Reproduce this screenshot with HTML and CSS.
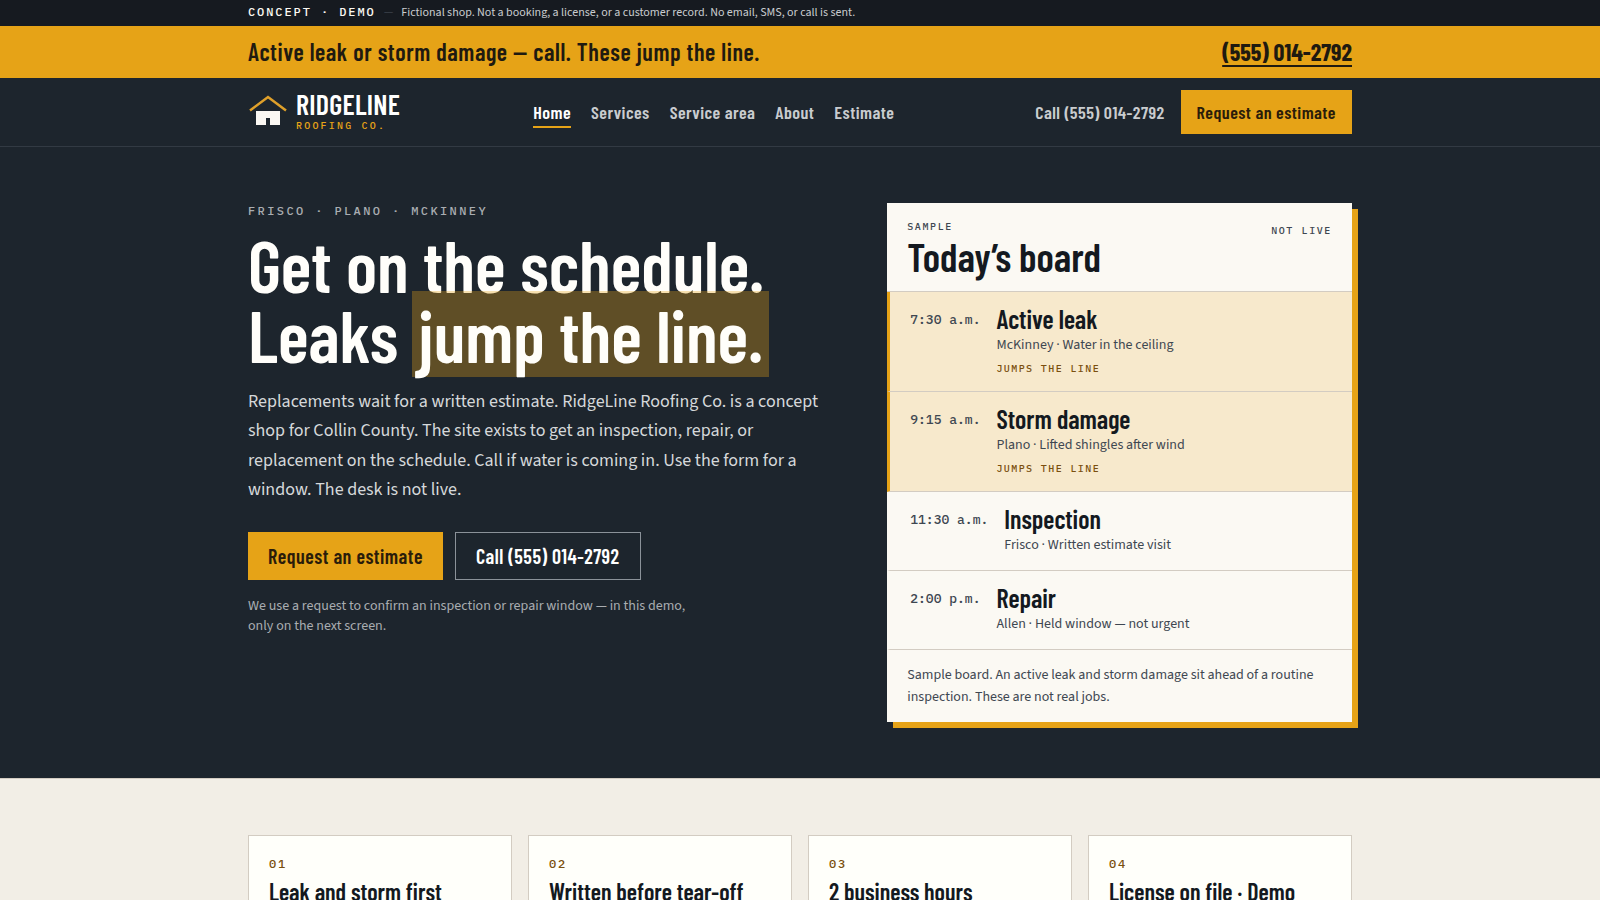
FILE: index.html
```html
<!DOCTYPE html>
<html lang="en">
<head>
  <meta charset="utf-8">
  <meta name="viewport" content="width=device-width, initial-scale=1">
  <title>RidgeLine Roofing Co.</title>
  <link rel="stylesheet" href="styles.css">
</head>
<body>
  <div class="notice">
    <div class="wrap notice-row">
      <span class="notice-tag">Concept · Demo</span>
      <span class="notice-dash" aria-hidden="true">—</span>
      <span>Fictional shop. Not a booking, a license, or a customer record. No email, SMS, or call is sent.</span>
    </div>
  </div>

  <div class="urgent">
    <div class="wrap urgent-row">
      <p class="urgent-text">Active leak or storm damage — call. These jump the line.</p>
      <a class="urgent-phone" href="tel:5550142792">(555) 014-2792</a>
    </div>
  </div>

  <header class="site-header">
    <div class="wrap header-row">
      <a class="brand" href="#">
        <svg class="brand-mark" viewBox="0 0 40 40" width="40" height="40" aria-hidden="true">
          <path d="M2 18.500 20 5l18 13.500" fill="none" stroke="#dfa02a" stroke-width="2.500"/>
          <path d="M8 19h24v14H22v-7h-4v7H8z" fill="#fbf8f3"/>
        </svg>
        <span class="brand-text">
          <span class="brand-name">RIDGELINE</span>
          <span class="brand-sub">Roofing Co.</span>
        </span>
      </a>
      <nav class="nav" aria-label="Main">
        <a class="nav-link is-current" href="#" aria-current="page">Home</a>
        <a class="nav-link" href="#services">Services</a>
        <a class="nav-link" href="#area">Service area</a>
        <a class="nav-link" href="#about">About</a>
        <a class="nav-link" href="#estimate">Estimate</a>
      </nav>
      <div class="header-actions">
        <a class="header-call" href="tel:5550142792">Call (555) 014-2792</a>
        <a class="btn btn-small btn-primary" href="#estimate">Request an estimate</a>
      </div>
    </div>
  </header>

  <main>
    <section class="hero">
      <div class="wrap hero-grid">
        <div class="hero-copy">
          <p class="eyebrow">Frisco · Plano · McKinney</p>
          <h1 class="headline">Get on the schedule.<br>Leaks <span class="mark">jump the line.</span></h1>
          <p class="lede">Replacements wait for a written estimate. RidgeLine Roofing Co. is a concept shop for Collin County. The site exists to get an inspection, repair, or replacement on the schedule. Call if water is coming in. Use the form for a window. The desk is not live.</p>
          <div class="hero-actions">
            <a class="btn btn-primary" href="#estimate">Request an estimate</a>
            <a class="btn btn-outline" href="tel:5550142792">Call (555) 014-2792</a>
          </div>
          <p class="hero-note">We use a request to confirm an inspection or repair window — in this demo, only on the next screen.</p>
        </div>

        <aside class="board" aria-labelledby="board-title">
          <div class="board-head">
            <div>
              <p class="label">Sample</p>
              <h2 class="board-title" id="board-title">Today’s board</h2>
            </div>
            <p class="label label-side">Not live</p>
          </div>
          <ul class="jobs">
            <li class="job is-urgent">
              <span class="job-time">7:30 a.m.</span>
              <div>
                <p class="job-name">Active leak</p>
                <p class="job-detail">McKinney · Water in the ceiling</p>
                <p class="job-flag">Jumps the line</p>
              </div>
            </li>
            <li class="job is-urgent">
              <span class="job-time">9:15 a.m.</span>
              <div>
                <p class="job-name">Storm damage</p>
                <p class="job-detail">Plano · Lifted shingles after wind</p>
                <p class="job-flag">Jumps the line</p>
              </div>
            </li>
            <li class="job">
              <span class="job-time">11:30 a.m.</span>
              <div>
                <p class="job-name">Inspection</p>
                <p class="job-detail">Frisco · Written estimate visit</p>
              </div>
            </li>
            <li class="job">
              <span class="job-time">2:00 p.m.</span>
              <div>
                <p class="job-name">Repair</p>
                <p class="job-detail">Allen · Held window — not urgent</p>
              </div>
            </li>
          </ul>
          <p class="board-note">Sample board. An active leak and storm damage sit ahead of a routine inspection. These are not real jobs.</p>
        </aside>
      </div>
    </section>

    <section class="promises">
      <div class="wrap promise-grid">
        <article class="promise">
          <p class="promise-num">01</p>
          <h3 class="promise-title">Leak and storm first</h3>
        </article>
        <article class="promise">
          <p class="promise-num">02</p>
          <h3 class="promise-title">Written before tear-off</h3>
        </article>
        <article class="promise">
          <p class="promise-num">03</p>
          <h3 class="promise-title">2 business hours</h3>
        </article>
        <article class="promise">
          <p class="promise-num">04</p>
          <h3 class="promise-title">License on file · Demo</h3>
        </article>
      </div>
    </section>
  </main>
</body>
</html>
```
FILE: styles.css
```css
:root {
  --ink: #14191f;
  --slate: #1d252d;
  --slate-line: #323a43;
  --amber: #e6a317;
  --amber-ink: #7a4f0e;
  --paper: #fbf9f3;
  --sand: #f2eee6;
  --line: #d3ccc2;
  --muted: #3e4751;
  --display: "Barlow Condensed", "Roboto Condensed", sans-serif;
  --body: "Source Sans 3", "Source Sans Pro", "Noto Sans", sans-serif;
  --mono: "IBM Plex Mono", "Liberation Mono", monospace;
}

* { box-sizing: border-box; }

body {
  margin: 0;
  background: var(--sand);
  color: var(--ink);
  font-family: var(--body);
  font-size: 16px;
  line-height: 1.6;
}

p, h1, h2, h3, ul { margin: 0; padding: 0; }
ul { list-style: none; }
a { color: inherit; text-decoration: none; }

.wrap {
  max-width: 1152px;
  margin: 0 auto;
  padding: 0 24px;
}

/* Notice and urgent bars */
.notice {
  background: #161a20;
  color: #c9cccf;
  font-size: 12px;
  line-height: 18px;
}
.notice-row {
  display: flex;
  gap: 8px;
  padding-top: 4px;
  padding-bottom: 4px;
}
.notice-tag {
  color: var(--paper);
  font-family: var(--mono);
  font-weight: 500;
  line-height: 16px;
  letter-spacing: 0.16em;
  text-transform: uppercase;
}
.notice-dash { color: #4c545d; }

.urgent {
  background: var(--amber);
  color: #1f1a10;
  font-family: var(--display);
  font-size: 24px;
  line-height: 32px;
}
.urgent-row {
  display: flex;
  align-items: center;
  justify-content: space-between;
  padding-top: 10px;
  padding-bottom: 10px;
}
.urgent-text {
  font-weight: 600;
  letter-spacing: 0.025em;
}
.urgent-phone {
  font-weight: 700;
  text-decoration: underline;
  text-decoration-thickness: 2px;
  text-underline-offset: 4px;
}

/* Header */
.site-header {
  background: var(--slate);
  border-bottom: 1px solid var(--slate-line);
  font-family: var(--display);
}
.header-row {
  display: flex;
  align-items: center;
  justify-content: space-between;
  padding-top: 12px;
  padding-bottom: 12px;
}
.brand {
  display: flex;
  align-items: center;
  gap: 8px;
}
.brand-mark { display: block; }
.brand-text {
  display: flex;
  flex-direction: column;
  gap: 4px;
}
.brand-name {
  color: #fff;
  font-size: 28px;
  font-weight: 600;
  line-height: 24px;
  letter-spacing: 0.01em;
}
.brand-sub {
  color: var(--amber);
  font-family: var(--mono);
  font-size: 10px;
  font-weight: 500;
  line-height: 12px;
  letter-spacing: 0.22em;
  text-transform: uppercase;
}
.nav {
  display: flex;
  gap: 20px;
}
.nav-link {
  padding-top: 2px;
  border-bottom: 2px solid transparent;
  color: #c9cccf;
  font-size: 18px;
  font-weight: 600;
  line-height: 27px;
  letter-spacing: 0.025em;
}
.nav-link.is-current {
  border-color: var(--amber);
  color: #fff;
}
.header-actions {
  display: flex;
  align-items: center;
  gap: 16px;
  padding-left: 8px;
}
.header-call {
  color: #c9cccf;
  font-size: 18px;
  font-weight: 600;
  letter-spacing: 0.025em;
}

.btn {
  display: inline-flex;
  align-items: center;
  min-height: 48px;
  padding: 0 20px;
  font-family: var(--display);
  font-size: 20px;
  font-weight: 600;
  line-height: 28px;
  letter-spacing: 0.025em;
}
.btn-primary {
  background: var(--amber);
  color: #2a1c0a;
}
.btn-outline {
  border: 1px solid #8b9299;
  color: #fff;
}
.btn-small {
  min-height: 44px;
  padding: 0 16px;
  font-size: 18px;
}

/* Hero */
.hero {
  padding: 56px 0;
  background: var(--slate);
}
.hero-grid {
  display: grid;
  grid-template-columns: 1.255fr 1fr;
  gap: 56px;
  align-items: start;
}
.eyebrow {
  color: #a9adb1;
  font-family: var(--mono);
  font-size: 12px;
  font-weight: 500;
  line-height: 16px;
  letter-spacing: 0.2em;
  text-transform: uppercase;
}
.headline {
  margin-top: 10px;
  color: #fffefa;
  font-family: var(--display);
  font-size: 72px;
  font-weight: 600;
  line-height: 70px;
}
.mark {
  padding: 0 6px;
  background: rgba(230, 163, 23, 0.33);
}
.lede {
  margin-top: 18px;
  color: #d5d8da;
  font-size: 18px;
  line-height: 1.625;
}
.hero-actions {
  display: flex;
  flex-wrap: wrap;
  gap: 12px;
  margin-top: 28px;
}
.hero-note {
  max-width: 448px;
  margin-top: 16px;
  color: #a9adb1;
  font-size: 14px;
  line-height: 20px;
}

/* Board */
.board {
  background: var(--paper);
  box-shadow: 6px 6px 0 var(--amber);
}
.board-head {
  display: flex;
  justify-content: space-between;
  padding: 16px 20px 14px;
  border-bottom: 1px solid var(--line);
}
.label {
  color: var(--muted);
  font-family: var(--mono);
  font-size: 10px;
  font-weight: 500;
  line-height: 16px;
  letter-spacing: 0.16em;
  text-transform: uppercase;
}
.label-side { padding-top: 4px; }
.board-title {
  font-family: var(--display);
  font-size: 40px;
  font-weight: 600;
  line-height: 42px;
}
.job {
  display: flex;
  gap: 16px;
  padding: 14px 20px;
  border-bottom: 1px solid var(--line);
  border-left: 3px solid transparent;
}
.job.is-urgent {
  border-left-color: var(--amber);
  background: #f7e9cc;
}
.job-time {
  color: var(--muted);
  font-family: var(--mono);
  font-size: 13px;
  font-weight: 500;
  line-height: 28px;
}
.job-name {
  font-family: var(--display);
  font-size: 26px;
  font-weight: 600;
  line-height: 26px;
}
.job-detail {
  margin-top: 2px;
  color: var(--muted);
  font-size: 14px;
  line-height: 22px;
}
.job-flag {
  margin-top: 5px;
  color: var(--amber-ink);
  font-family: var(--mono);
  font-size: 10px;
  font-weight: 500;
  line-height: 16px;
  letter-spacing: 0.14em;
  text-transform: uppercase;
}
.board-note {
  padding: 14px 20px;
  color: var(--muted);
  font-size: 14px;
  line-height: 22px;
}

/* Promises */
.promises {
  padding: 56px 0;
  border-top: 1px solid var(--line);
}
.promise-grid {
  display: grid;
  grid-template-columns: repeat(4, 1fr);
  gap: 16px;
}
.promise {
  padding: 20px;
  border: 1px solid var(--line);
  background: #fffffa;
}
.promise-num {
  color: var(--amber-ink);
  font-family: var(--mono);
  font-size: 12px;
  font-weight: 500;
  line-height: 16px;
  letter-spacing: 0.14em;
}
.promise-title {
  margin-top: 4px;
  font-family: var(--display);
  font-size: 24px;
  font-weight: 600;
  line-height: 32px;
}
```
